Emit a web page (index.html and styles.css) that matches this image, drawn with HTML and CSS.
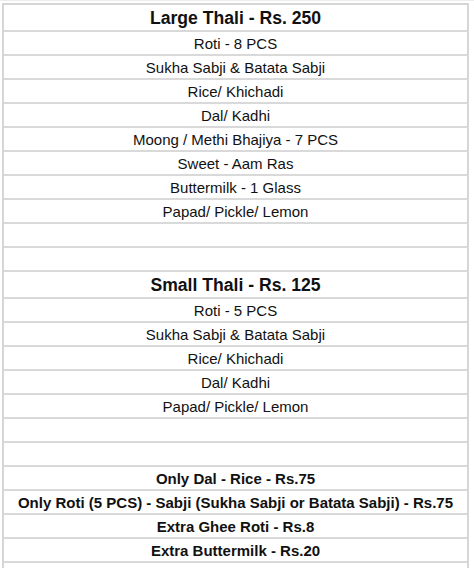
FILE: index.html
```html
<!DOCTYPE html>
<html>
<head>
<meta charset="utf-8">
<link rel="stylesheet" href="styles.css">
</head>
<body>
<div class="sheet">
  <div class="row head">Large Thali - Rs. 250</div>
  <div class="row">Roti - 8 PCS</div>
  <div class="row">Sukha Sabji &amp; Batata Sabji</div>
  <div class="row">Rice/ Khichadi</div>
  <div class="row">Dal/ Kadhi</div>
  <div class="row">Moong / Methi Bhajiya - 7 PCS</div>
  <div class="row">Sweet - Aam Ras</div>
  <div class="row">Buttermilk - 1 Glass</div>
  <div class="row">Papad/ Pickle/ Lemon</div>
  <div class="row"></div>
  <div class="row"></div>
  <div class="row head small">Small Thali - Rs. 125</div>
  <div class="row">Roti - 5 PCS</div>
  <div class="row">Sukha Sabji &amp; Batata Sabji</div>
  <div class="row">Rice/ Khichadi</div>
  <div class="row">Dal/ Kadhi</div>
  <div class="row">Papad/ Pickle/ Lemon</div>
  <div class="row"></div>
  <div class="row"></div>
  <div class="row bold">Only Dal - Rice - Rs.75</div>
  <div class="row bold">Only Roti (5 PCS) - Sabji (Sukha Sabji or Batata Sabji) - Rs.75</div>
  <div class="row bold">Extra Ghee Roti - Rs.8</div>
  <div class="row bold">Extra Buttermilk - Rs.20</div>
  <div class="row"></div>
</div>
</body>
</html>
```
FILE: styles.css
```css
html, body {
  margin: 0;
  padding: 0;
  background: #ffffff;
}
body {
  padding-top: 2px;
  padding-left: 2px;
  border-top: 1px solid #ececec;
  font-family: "Liberation Sans", Arial, sans-serif;
  color: #111111;
}
.sheet {
  width: 463px;
  border: 2px solid #d6d6d6;
  border-bottom: none;
}
.row {
  height: 22px;
  padding-top: 1px;
  box-sizing: content-box;
  border-bottom: 2px solid #d9d9d9;
  display: flex;
  align-items: center;
  justify-content: center;
  font-size: 15px;
  white-space: nowrap;
}
.row:not(.head) {
  height: 21px;
}
.head {
  height: 24px;
  font-size: 17.6px;
  font-weight: bold;
}
.bold {
  font-weight: bold;
}
```
